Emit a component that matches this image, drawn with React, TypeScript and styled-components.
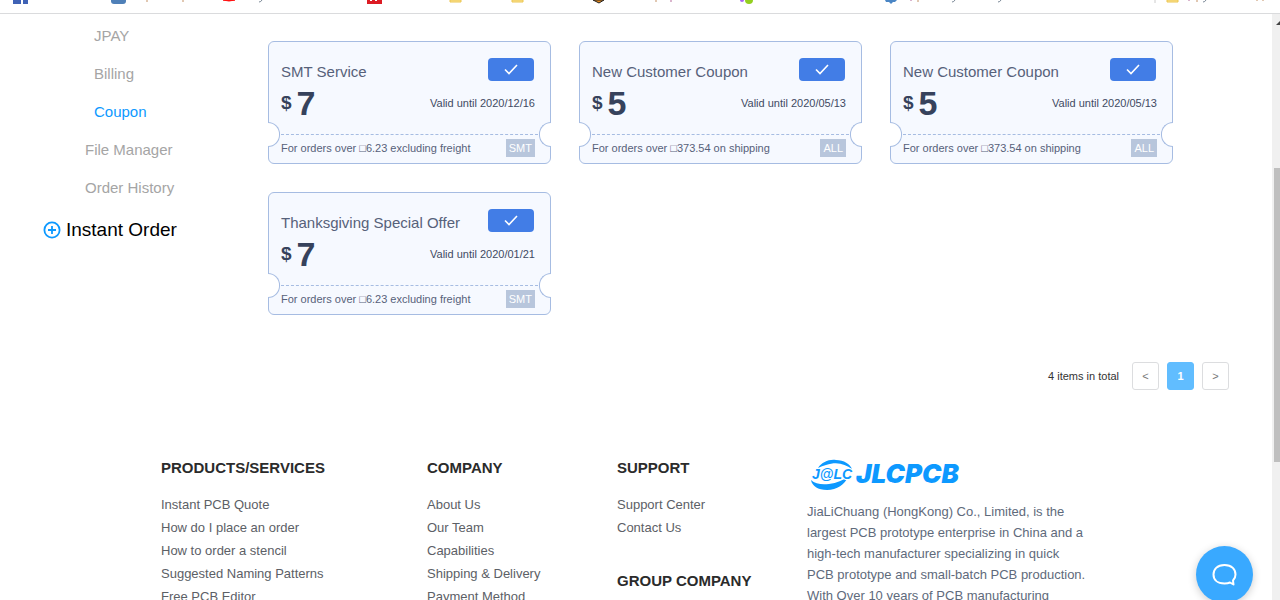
import React from 'react';
import styled, { createGlobalStyle, css } from 'styled-components';

const GlobalStyle = createGlobalStyle`
  *, *::before, *::after { box-sizing: border-box; }
  body {
    margin: 0;
    background: #fff;
    color: #333;
    font-family: "Liberation Sans", Arial, sans-serif;
    font-size: 13px;
  }
  h3, p, ul { margin: 0; padding: 0; }
  ul { list-style: none; }
  a { color: inherit; text-decoration: none; }
  button { font: inherit; cursor: pointer; }
`;

const Screen = styled.div`
  display: flex;
  flex-direction: column;
  height: 100vh;
  overflow: hidden;
`;

const BookmarkBar = styled.div`
  flex: none;
  height: 14px;
  overflow: hidden;
  border-bottom: 1px solid #dadbdd;
  svg { display: block; }
`;

const Viewport = styled.div`
  flex: 1;
  min-height: 0;
  display: flex;
`;

const Page = styled.div`
  flex: 1;
  min-width: 0;
  overflow: hidden;
`;

const ScrollTrack = styled.div`
  flex: none;
  width: 8px;
  padding: 6px 0 0 2px;
  overflow: hidden;
  background: #f0f0f0;
  svg { display: block; margin-left: 2px; }
`;

const ScrollThumb = styled.div`
  height: 294px;
  margin-top: 143px;
  background: #bfbfbf;
`;

const Account = styled.div`
  display: flex;
`;

const Sidebar = styled.nav`
  flex: none;
  width: 268px;
  padding-top: 3px;
`;

const MenuLink = styled.a<{ $nested?: boolean; $active?: boolean }>`
  display: block;
  padding-left: ${p => (p.$nested ? 94 : 85)}px;
  font-size: 15px;
  line-height: 38px;
  color: ${p => (p.$active ? '#0d99ff' : '#a5a5a5')};
`;

const InstantOrder = styled.a`
  display: flex;
  align-items: center;
  gap: 5px;
  padding-left: 43px;
  font-size: 19px;
  line-height: 46px;
  color: #000;
`;

const Content = styled.main`
  flex: 1;
  min-width: 0;
  padding: 27px 43px 0 0;
`;

const CouponGrid = styled.div`
  display: grid;
  grid-template-columns: repeat(auto-fill, 283px);
  gap: 28px;
`;

const Card = styled.article`
  position: relative;
  border: 1px solid #a6bce2;
  border-radius: 6px;
  background: #f6f9ff;
  color: #56617a;
`;

const Notch = styled.span<{ $side: 'left' | 'right' }>`
  position: absolute;
  top: 80px;
  width: 12px;
  height: 25px;
  background: #fff;
  border: 1px solid #a6bce2;
  ${p =>
    p.$side === 'left'
      ? css`left: -1px; border-left: 0; border-radius: 0 12px 12px 0;`
      : css`right: -1px; border-right: 0; border-radius: 12px 0 0 12px;`}
`;

const CardHead = styled.div`
  display: flex;
  align-items: flex-end;
  justify-content: space-between;
  padding: 16px 16px 0 12px;
`;

const CardTitle = styled.h3`
  font-size: 15px;
  font-weight: 400;
  line-height: 18px;
`;

const UseButton = styled.button`
  display: flex;
  align-items: center;
  justify-content: center;
  width: 46px;
  height: 23px;
  padding: 0;
  border: 0;
  border-radius: 4px;
  background: #427de6;
`;

const CardPrice = styled.div`
  display: flex;
  align-items: center;
  justify-content: space-between;
  padding: 0 15px 0 12px;
  line-height: 44px;
  font-size: 11px;
  color: #3f4a62;
`;

const Amount = styled.strong`
  display: flex;
  align-items: center;
  gap: 5px;
  font-size: 34px;
  color: #36425c;
  small { font-size: 19px; }
`;

const Perforation = styled.div`
  margin: 9px 12px 0;
  border-top: 1px dashed #a6bce2;
`;

const CardFoot = styled.div`
  display: flex;
  align-items: center;
  justify-content: space-between;
  padding: 4px 15px 6px 12px;
  font-size: 11px;
`;

const Terms = styled.p`
  line-height: 16px;
`;

const Tag = styled.span`
  padding: 0 3px;
  background: #b8c6dc;
  color: #fff;
  line-height: 18px;
`;

const Pagination = styled.div`
  display: flex;
  align-items: center;
  justify-content: flex-end;
  gap: 8px;
  margin-top: 47px;
  font-size: 11px;
`;

const Total = styled.span`
  margin-right: 5px;
`;

const PageButton = styled.button<{ $current?: boolean }>`
  width: 27px;
  height: 28px;
  padding: 0;
  border: 1px solid ${p => (p.$current ? '#61bdff' : '#dcdddf')};
  border-radius: 3px;
  background: ${p => (p.$current ? '#61bdff' : '#fff')};
  color: ${p => (p.$current ? '#fff' : '#777')};
  font-weight: ${p => (p.$current ? 700 : 400)};
`;

const Footer = styled.footer`
  display: grid;
  grid-template-columns: 28fr 20fr 20fr 32fr;
  max-width: 950px;
  margin: 68px auto 0;
`;

const FooterTitle = styled.h3`
  font-size: 15px;
  line-height: 20px;
  color: #2b2b2b;
`;

const FooterList = styled.ul`
  padding: 15px 0 32px;
  line-height: 23px;
  color: #5c6066;
`;

const Brand = styled.div`
  svg { display: block; }
`;

const About = styled.p`
  max-width: 280px;
  margin-top: 9px;
  line-height: 21px;
  color: #606a7b;
`;

const ChatButton = styled.button`
  position: fixed;
  right: 27px;
  bottom: -3px;
  display: flex;
  align-items: center;
  justify-content: center;
  width: 57px;
  height: 57px;
  padding: 0;
  border: 0;
  border-radius: 50%;
  background: #39a9ff;
  box-shadow: 0 2px 8px rgba(0, 0, 0, 0.2);
`;

const coupons = [
  { title: 'SMT Service', amount: 7, until: '2020/12/16', terms: 'For orders over □6.23 excluding freight', tag: 'SMT' },
  { title: 'New Customer Coupon', amount: 5, until: '2020/05/13', terms: 'For orders over □373.54 on shipping', tag: 'ALL' },
  { title: 'New Customer Coupon', amount: 5, until: '2020/05/13', terms: 'For orders over □373.54 on shipping', tag: 'ALL' },
  { title: 'Thanksgiving Special Offer', amount: 7, until: '2020/01/21', terms: 'For orders over □6.23 excluding freight', tag: 'SMT' },
];

const products = ['Instant PCB Quote', 'How do I place an order', 'How to order a stencil', 'Suggested Naming Patterns', 'Free PCB Editor'];
const company = ['About Us', 'Our Team', 'Capabilities', 'Shipping & Delivery', 'Payment Method'];
const support = ['Support Center', 'Contact Us'];

function BookmarkIcons() {
  return (
    <svg width="1280" height="6" viewBox="0 0 1280 6" aria-hidden="true">
      <path d="M13 0h8v4h-8zM23 0h5v4h-5z" fill="#3f62b5" />
      <path d="M111 0h15v1q0 3-3 3h-9q-3 0-3-3z" fill="#4f80b8" />
      <path d="M223 0h12q-6 2-12 0z" fill="#f11" stroke="#f11" />
      <path d="M367 0h15v4h-15z" fill="#dc1c24" />
      <path d="M371 0v1M376 0v1" stroke="#fff" strokeWidth="2" />
      <path d="M450 0h11v2h-11zM512 0h11v2h-11zM1167 0h11v2h-11z" fill="#fde596" stroke="#ebc550" />
      <path d="M593 0l6 3 5-3z" fill="#e78a1d" stroke="#222" />
      <circle cx="742" cy="0" r="2" fill="#a866f2" />
      <circle cx="749" cy="0" r="4" fill="#93cf20" />
      <path d="M885 0h12l-2 2h-2l-2 2-2-2h-3z" fill="#4b86c5" />
      <path d="M147 0v2M183 0v2M656 0v2M918 0v2M1197 0v2M1257 0v1M1263 0v1" stroke="#c39167" />
      <path d="M671 0v2M911 0v1M1189 0v1" stroke="#b56d9c" />
      <path d="M262 0q-1 2-3 2M955 0q-1 2-3 2M1001 0q-1 2-3 2M1206 0q-1 2-3 2" stroke="#7a8896" fill="none" />
      <path d="M1155 0v3" stroke="#ccc" />
    </svg>
  );
}

function Logo() {
  return (
    <svg width="160" height="34" viewBox="0 0 160 34" role="img" aria-label="JLCPCB">
      <path d="M11 10C15 4 22 1 29 2C37 2 43 6 45 11C38 6 30 3 19 7Q15 8 11 10z" fill="#0d99ff" />
      <path d="M4 22C8 26 15 27 22 26C30 25 36 22 41 19C38 26 30 32 20 32C11 32 5 28 4 22z" fill="#0d99ff" />
      <text x="5" y="21" fontFamily="'Liberation Sans', Arial, sans-serif" fontSize="14" fontWeight="700" fontStyle="italic" fill="#0d99ff" stroke="#fff" strokeWidth="2" paintOrder="stroke">J@LC</text>
      <text x="49" y="25" fontFamily="Inter, sans-serif" fontSize="26" fontWeight="900" fontStyle="italic" fill="#0d99ff">JLCPCB</text>
    </svg>
  );
}

function Coupon({ title, amount, until, terms, tag }: (typeof coupons)[number]) {
  return (
    <Card>
      <CardHead>
        <CardTitle>{title}</CardTitle>
        <UseButton aria-label={`Use ${title}`}>
          <svg width="14" height="11" viewBox="0 0 14 11" fill="none" stroke="#fff" strokeWidth="1.6">
            <path d="M1 5.5L5 9.500L13 1" />
          </svg>
        </UseButton>
      </CardHead>
      <CardPrice>
        <Amount><small>$</small>{amount}</Amount>
        <span>Valid until {until}</span>
      </CardPrice>
      <Perforation />
      <CardFoot>
        <Terms>{terms}</Terms>
        <Tag>{tag}</Tag>
      </CardFoot>
      <Notch $side="left" />
      <Notch $side="right" />
    </Card>
  );
}

function LinkColumn({ title, links }: { title: string; links: string[] }) {
  return (
    <section>
      <FooterTitle>{title}</FooterTitle>
      <FooterList>
        {links.map(l => <li key={l}><a href="#">{l}</a></li>)}
      </FooterList>
    </section>
  );
}

export default function App() {
  return (
    <Screen>
      <GlobalStyle />
      <BookmarkBar><BookmarkIcons /></BookmarkBar>
      <Viewport>
        <Page>
          <Account>
            <Sidebar>
              <MenuLink href="#" $nested>JPAY</MenuLink>
              <MenuLink href="#" $nested>Billing</MenuLink>
              <MenuLink href="#" $nested $active>Coupon</MenuLink>
              <MenuLink href="#">File Manager</MenuLink>
              <MenuLink href="#">Order History</MenuLink>
              <InstantOrder href="#">
                <svg width="18" height="18" viewBox="0 0 18 18" fill="none" stroke="#0d99ff" strokeWidth="1.8">
                  <circle cx="9" cy="9" r="7.6" />
                  <path d="M9 5v8M5 9h8" />
                </svg>
                Instant Order
              </InstantOrder>
            </Sidebar>
            <Content>
              <CouponGrid>
                {coupons.map((c, i) => <Coupon key={i} {...c} />)}
              </CouponGrid>
              <Pagination>
                <Total>4 items in total</Total>
                <PageButton aria-label="Previous page">&lt;</PageButton>
                <PageButton $current aria-current="page">1</PageButton>
                <PageButton aria-label="Next page">&gt;</PageButton>
              </Pagination>
            </Content>
          </Account>
          <Footer>
            <LinkColumn title="PRODUCTS/SERVICES" links={products} />
            <LinkColumn title="COMPANY" links={company} />
            <div>
              <LinkColumn title="SUPPORT" links={support} />
              <FooterTitle>GROUP COMPANY</FooterTitle>
            </div>
            <Brand>
              <Logo />
              <About>
                JiaLiChuang (HongKong) Co., Limited, is the largest PCB prototype enterprise in China and a
                high-tech manufacturer specializing in quick PCB prototype and small-batch PCB production.
                With Over 10 years of PCB manufacturing
              </About>
            </Brand>
          </Footer>
        </Page>
        <ScrollTrack>
          <svg width="6" height="5" viewBox="0 0 6 5"><path d="M0 5L5 0V5z" fill="#444" /></svg>
          <ScrollThumb />
        </ScrollTrack>
      </Viewport>
      <ChatButton aria-label="Chat">
        <svg width="25" height="23" viewBox="0 0 25 23" fill="none" stroke="#fff" strokeWidth="2" strokeLinejoin="round">
          <path d="M18 19.5Q16 20.5 12.500 20.500C5 20.500 1.500 16.500 1.500 11.500S5 2 12.500 2S23.500 6.500 23.500 11.500Q23.500 15 21 17.500L21.500 21.500Z" />
        </svg>
      </ChatButton>
    </Screen>
  );
}
